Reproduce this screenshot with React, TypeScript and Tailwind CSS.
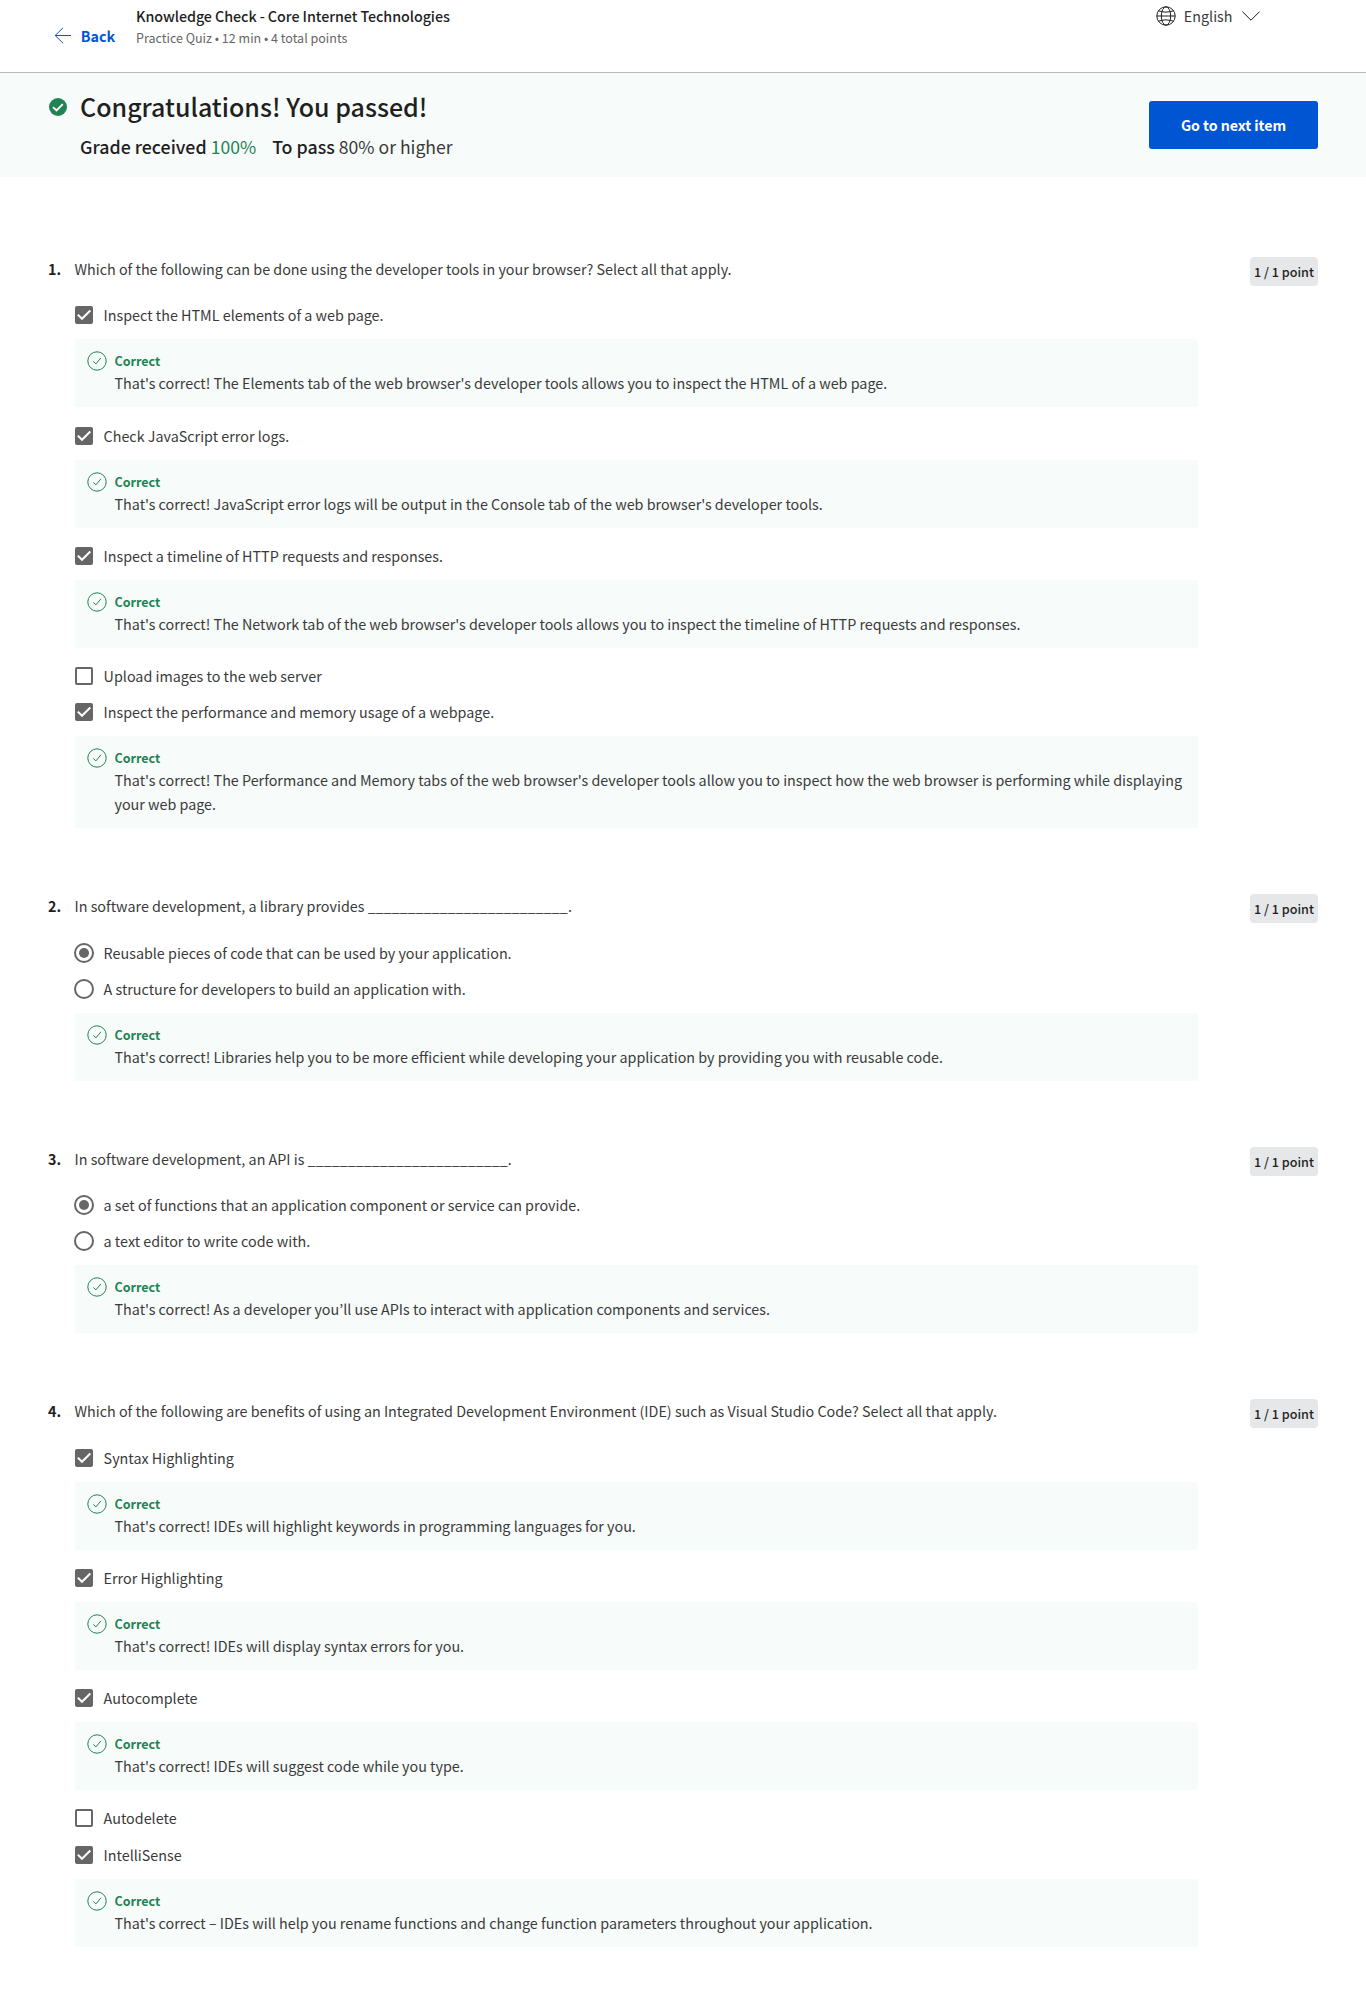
type Option = { text: string; checked: boolean; feedback?: string; gap?: string };
type Question = { title: string; kind: "checkbox" | "radio"; gap: string; options: Option[] };

const questions: Question[] = [
  {
    title: "Which of the following can be done using the developer tools in your browser? Select all that apply.",
    kind: "checkbox",
    gap: "mt-[19px]",
    options: [
      {
        text: "Inspect the HTML elements of a web page.",
        checked: true,
        feedback: "That's correct! The Elements tab of the web browser's developer tools allows you to inspect the HTML of a web page.",
      },
      {
        text: "Check JavaScript error logs.",
        checked: true,
        gap: "mt-[19px]",
        feedback: "That's correct! JavaScript error logs will be output in the Console tab of the web browser's developer tools.",
      },
      {
        text: "Inspect a timeline of HTTP requests and responses.",
        checked: true,
        gap: "mt-[18px]",
        feedback:
          "That's correct! The Network tab of the web browser's developer tools allows you to inspect the timeline of HTTP requests and responses.",
      },
      { text: "Upload images to the web server", checked: false, gap: "mt-[18px]" },
      {
        text: "Inspect the performance and memory usage of a webpage.",
        checked: true,
        gap: "mt-4",
        feedback:
          "That's correct! The Performance and Memory tabs of the web browser's developer tools allow you to inspect how the web browser is performing while displaying your web page.",
      },
    ],
  },
  {
    title: "In software development, a library provides _________________________.",
    kind: "radio",
    gap: "mt-5",
    options: [
      { text: "Reusable pieces of code that can be used by your application.", checked: true },
      {
        text: "A structure for developers to build an application with.",
        checked: false,
        gap: "mt-4",
        feedback:
          "That's correct! Libraries help you to be more efficient while developing your application by providing you with reusable code.",
      },
    ],
  },
  {
    title: "In software development, an API is _________________________.",
    kind: "radio",
    gap: "mt-[19px]",
    options: [
      { text: "a set of functions that an application component or service can provide.", checked: true },
      {
        text: "a text editor to write code with.",
        checked: false,
        gap: "mt-4",
        feedback: "That's correct! As a developer you’ll use APIs to interact with application components and services.",
      },
    ],
  },
  {
    title:
      "Which of the following are benefits of using an Integrated Development Environment (IDE) such as Visual Studio Code? Select all that apply.",
    kind: "checkbox",
    gap: "mt-5",
    options: [
      {
        text: "Syntax Highlighting",
        checked: true,
        feedback: "That's correct! IDEs will highlight keywords in programming languages for you.",
      },
      {
        text: "Error Highlighting",
        checked: true,
        gap: "mt-[18px]",
        feedback: "That's correct! IDEs will display syntax errors for you.",
      },
      {
        text: "Autocomplete",
        checked: true,
        gap: "mt-[18px]",
        feedback: "That's correct! IDEs will suggest code while you type.",
      },
      { text: "Autodelete", checked: false, gap: "mt-[18px]" },
      {
        text: "IntelliSense",
        checked: true,
        gap: "mt-[17px]",
        feedback:
          "That's correct – IDEs will help you rename functions and change function parameters throughout your application.",
      },
    ],
  },
];

function Checkbox({ checked }: { checked: boolean }) {
  return checked ? (
    <span className="flex size-[18px] shrink-0 rounded-[2px] bg-[#666]">
      <svg viewBox="0 0 18 18" className="size-[18px]" fill="none" stroke="#fff" strokeWidth="2">
        <path d="M2.8 8.6 7 12.8l8.3-8.3" />
      </svg>
    </span>
  ) : (
    <span className="size-[18px] shrink-0 rounded-[2px] border-2 border-[#666] bg-white" />
  );
}

function Radio({ checked }: { checked: boolean }) {
  return (
    <span className="-mx-px flex size-5 shrink-0 items-center justify-center rounded-full border-2 border-[#666] bg-white">
      {checked && <span className="size-2.5 rounded-full bg-[#666]" />}
    </span>
  );
}

function Feedback({ text }: { text: string }) {
  return (
    <div className="mt-3.5 flex w-[1123px] gap-[7.5px] bg-[#f7fbfa] p-3">
      <svg viewBox="0 0 20 20" className="size-5 shrink-0" fill="none" stroke="#1f8354">
        <circle cx="10" cy="10" r="9.2" />
        <path d="m6.3 10.4 2.6 2.5 5-6" />
      </svg>
      <div>
        <p className="text-[12.53px] leading-5 font-bold text-[#1f8354]">Correct</p>
        <p className="leading-6">{text}</p>
      </div>
    </div>
  );
}

function QuestionBlock({ q, index }: { q: Question; index: number }) {
  return (
    <section>
      <div className="flex h-[29px] justify-between">
        <div className="flex leading-6">
          <span className="w-[26.5px] font-bold text-[#1f1f1f]">{index + 1}.</span>
          <h2>{q.title}</h2>
        </div>
        <span className="flex h-[29px] w-[68px] items-center justify-center rounded bg-[#e5e7e8] text-[12.6px] leading-[29px] font-medium text-[#1f1f1f]">
          1 / 1 point
        </span>
      </div>
      <div className={"pl-[27px] " + q.gap}>
        {q.options.map((o) => (
          <div key={o.text} className={o.gap}>
            <label className="flex h-5 items-center gap-[10.6px] leading-5">
              {q.kind === "checkbox" ? <Checkbox checked={o.checked} /> : <Radio checked={o.checked} />}
              <span>{o.text}</span>
            </label>
            {o.feedback && <Feedback text={o.feedback} />}
          </div>
        ))}
      </div>
    </section>
  );
}

export default function App() {
  return (
    <div className="min-h-[2011px] bg-white font-['Noto_Sans_CJK_KR',sans-serif] text-[14.33px] text-[#3a3a3a]">
      <header className="flex h-[73px] items-start border-b border-[#b9bcbb] pr-[106px] pl-[54px]">
        <a className="mt-6 flex h-6 w-[62px] items-center gap-[8.8px] leading-6 font-bold text-[#0056d2]">
          <svg viewBox="0 0 18 18" className="size-[18px] shrink-0" fill="none" stroke="#0056d2" strokeWidth="1">
            <path d="M17 8.5H1M9 .8 1.2 8.5 9 16.2" />
          </svg>
          Back
        </a>
        <div className="mt-[5px] ml-5">
          <h1 className="leading-[22px] font-medium tracking-[-0.08px] text-[#1f1f1f]">
            Knowledge Check - Core Internet Technologies
          </h1>
          <p className="text-[12.53px] leading-[22px] text-[#666]">Practice Quiz • 12 min • 4 total points</p>
        </div>
        <div className="mt-[5px] ml-auto flex h-[22px] items-center leading-[22px]">
          <svg viewBox="0 0 20 20" className="size-5" fill="none" stroke="#1f1f1f" strokeWidth="1">
            <circle cx="10" cy="10" r="9.2" />
            <ellipse cx="10" cy="10" rx="4.7" ry="9.2" />
            <path d="M.8 10h18.4M2.6 4.8c2 .9 4.5 1.3 7.4 1.3s5.4-.4 7.4-1.3M2.6 15.2c2-.9 4.5-1.3 7.4-1.3s5.4.4 7.4 1.3" />
          </svg>
          <span className="ml-2">English</span>
          <svg viewBox="0 0 18 10" className="ml-[9.5px] h-2.5 w-[18px]" fill="none" stroke="#1f1f1f" strokeWidth="1">
            <path d="m.4.6 8.6 8.6L17.6.6" />
          </svg>
        </div>
      </header>

      <div className="flex h-[104px] items-start justify-between bg-[#f7fbfa] pr-12 pl-[49px] text-[#1f1f1f]">
        <div className="mt-[15px] flex">
          <svg viewBox="0 0 18 18" className="mt-2.5 size-[18px]">
            <circle cx="9" cy="9" r="9" fill="#1f8354" />
            <path d="m4 9.2 3.5 3.3 6.3-6.4" fill="none" stroke="#fff" strokeWidth="1.8" />
          </svg>
          <div className="ml-[13px]">
            <h2 className="text-[25px] leading-9 font-medium">Congratulations! You passed!</h2>
            <div className="mt-2 flex gap-4 text-[17.8px] leading-7">
              <p className="font-medium">
                Grade received <span className="text-[17.6px] font-normal text-[#1f8354]">100%</span>
              </p>
              <p className="font-medium">
                To pass <span className="text-[17.6px] font-normal text-[#3a3a3a]">80% or higher</span>
              </p>
            </div>
          </div>
        </div>
        <button className="mt-7 h-12 w-[169px] rounded-[3px] bg-[#0056d2] text-[14.2px] leading-6 font-bold tracking-[-0.05px] text-white">
          Go to next item
        </button>
      </div>

      <main className="flex flex-col gap-[66px] pt-20 pr-12 pl-12">
        {questions.map((q, i) => (
          <QuestionBlock key={q.title} q={q} index={i} />
        ))}
      </main>
    </div>
  );
}
